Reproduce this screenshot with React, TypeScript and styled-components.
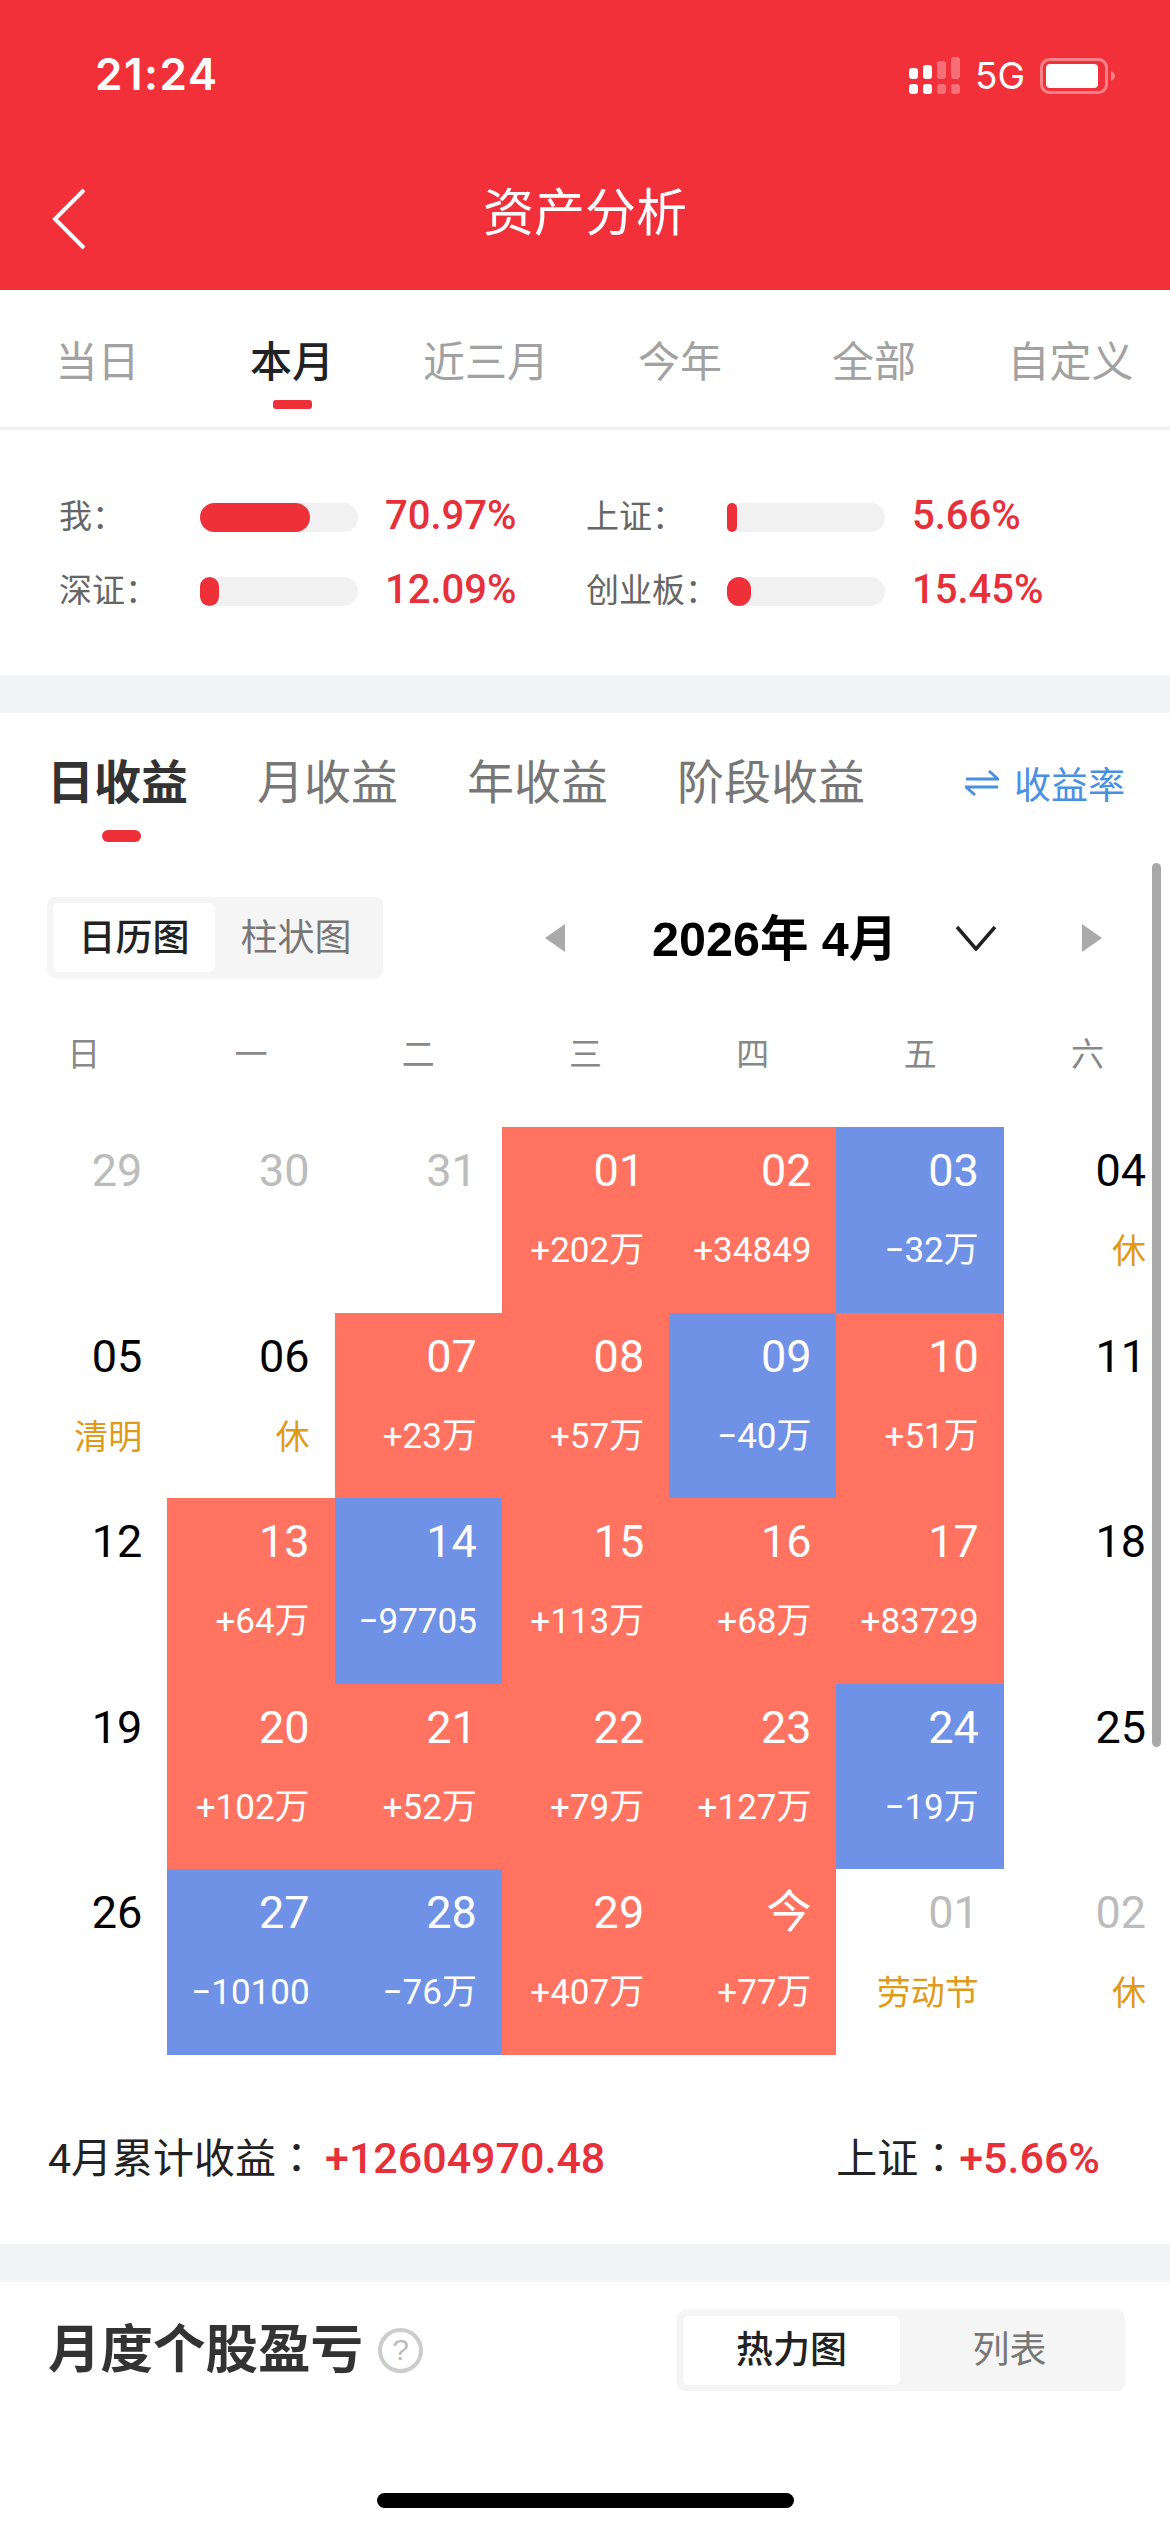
import React from "react";
import styled, { createGlobalStyle } from "styled-components";

const GlobalStyle = createGlobalStyle`
  * { box-sizing: border-box; }
  html, body { margin: 0; padding: 0; background: #fff; }
  body { font-family: Roboto, "Noto Sans CJK SC", "Liberation Sans", sans-serif; }
`;

const RED = "#ee3039";

const Page = styled.div`
  position: relative;
  width: 1170px;
  height: 2532px;
  overflow: hidden;
  background: #fff;
`;

const Header = styled.header`
  height: 290px;
  background: #f1303a;
  color: #fff;
  display: flex;
  flex-direction: column;
`;

const StatusBar = styled.div`
  height: 150px;
  padding: 49px 54px 0 95px;
  display: flex;
  justify-content: space-between;
  align-items: flex-start;
`;

const Clock = styled.span`
  font-family: Inter, "Liberation Sans", sans-serif;
  font-size: 44px;
  line-height: 50px;
  font-weight: 600;
  letter-spacing: 1.5px;
`;

const StatusIcons = styled.div`
  display: flex;
  align-items: center;
  gap: 15px;
  height: 50px;
  padding-top: 3px;
`;

const NetLabel = styled.span`
  font-family: Inter, "Liberation Sans", sans-serif;
  font-size: 37px;
  line-height: 40px;
  font-weight: 400;
`;

const NavBar = styled.div`
  display: flex;
  align-items: center;
  justify-content: center;
  position: relative;
  height: 126px;
  padding-top: 2px;
`;

const BackIcon = styled.svg`
  position: absolute;
  left: 50px;
  top: 38px;
`;

const NavTitle = styled.h1`
  margin: 0;
  font-size: 51px;
  line-height: 60px;
  font-weight: 400;
`;

const PeriodTabs = styled.nav`
  height: 140px;
  border-bottom: 3px solid #f0f0f0;
  display: grid;
  grid-template-columns: 195px 194px 194px 194px 194px 199px;
`;

const PeriodTab = styled.div<{ $active?: boolean }>`
  position: relative;
  display: flex;
  justify-content: center;
  padding-top: 43px;
  font-size: 42px;
  line-height: 60px;
  font-weight: ${(p) => (p.$active ? 500 : 400)};
  color: ${(p) => (p.$active ? "#222" : "#a2a2a2")};

  ${(p) =>
    p.$active &&
    `&::after {
      content: "";
      position: absolute;
      left: 78px;
      top: 110px;
      width: 39px;
      height: 9px;
      border-radius: 3px;
      background: ${RED};
    }`}
`;

const Stats = styled.section`
  height: 245px;
  padding: 69px 0 0 59px;
  display: grid;
  grid-template-columns: 527px 1fr;
  grid-auto-rows: 74px;
`;

const StatItem = styled.div`
  display: flex;
  align-items: center;
  height: 36px;
`;

const StatLabel = styled.span`
  width: 141px;
  font-size: 33px;
  line-height: 36px;
  color: #666;
`;

const Track = styled.div`
  width: 158px;
  height: 29px;
  border-radius: 15px;
  background: #f1f1f2;
`;

const Fill = styled.div`
  height: 100%;
  border-radius: 15px;
  background: ${RED};
`;

const StatValue = styled.span`
  margin: 0 0 2px 27px;
  font-size: 40px;
  line-height: 44px;
  font-weight: 500;
  color: #e6303a;
`;

const Gap = styled.div`
  height: 38px;
  background: #f3f4f6;
`;

const EarnTabs = styled.div`
  height: 184px;
  padding: 38px 45px 0 47px;
  display: flex;
  align-items: flex-start;
`;

const EarnTab = styled.div<{ $active?: boolean }>`
  position: relative;
  margin-right: 69px;
  font-size: 47px;
  line-height: 64px;
  font-weight: ${(p) => (p.$active ? 700 : 400)};
  color: ${(p) => (p.$active ? "#333" : "#777")};

  ${(p) =>
    p.$active &&
    `&::after {
      content: "";
      position: absolute;
      left: 55px;
      top: 79px;
      width: 39px;
      height: 12px;
      border-radius: 6px;
      background: ${RED};
    }`}
`;

const RateLink = styled.div`
  margin-left: auto;
  display: flex;
  align-items: center;
  gap: 15px;
  height: 64px;
  font-size: 37px;
  color: #4a90e2;
`;

const ToolRow = styled.div`
  height: 138px;
  padding: 0 0 0 47px;
  display: flex;
  align-items: flex-start;
`;

const Segmented = styled.div<{ $width: number; $height: number }>`
  width: ${(p) => p.$width}px;
  height: ${(p) => p.$height}px;
  padding: 6px;
  display: flex;
  border-radius: 8px;
  background: #f5f5f6;
`;

const SegButton = styled.div<{ $active?: boolean; $grow?: number }>`
  flex: ${(p) => p.$grow ?? 1};
  display: flex;
  align-items: center;
  justify-content: center;
  padding-bottom: 6px;
  font-size: 37px;
  border-radius: 6px;
  font-weight: ${(p) => (p.$active ? 500 : 400)};
  background: ${(p) => (p.$active ? "#fff" : "transparent")};
  color: ${(p) => (p.$active ? "#222" : "#777")};
`;

const MonthNav = styled.div`
  margin-left: 162px;
  width: 557px;
  height: 81px;
  display: flex;
  align-items: center;
`;

const MonthTitle = styled.span`
  margin-left: 87px;
  width: 240px;
  padding-bottom: 6px;
  font-family: "Liberation Sans", "Noto Sans CJK SC", sans-serif;
  font-size: 48.5px;
  font-weight: 700;
  color: #000;
  white-space: nowrap;
`;

const DownIcon = styled.svg`
  margin-left: 63px;
`;

const NextIcon = styled.svg`
  margin-left: 85px;
`;

const WeekRow = styled.div`
  height: 92px;
  display: grid;
  grid-template-columns: repeat(7, 167.3px);
`;

const WeekDay = styled.div`
  text-align: center;
  font-size: 33px;
  line-height: 40px;
  color: #888;
`;

const Calendar = styled.div`
  display: grid;
  grid-template-columns: repeat(7, 167.3px);
  grid-auto-rows: 185.6px;
`;

type Tone = "up" | "down" | "plain" | "muted";

const Cell = styled.div<{ $tone: Tone }>`
  padding: 19px 25px 0 0;
  text-align: right;
  background: ${(p) =>
    p.$tone === "up" ? "#ff7360" : p.$tone === "down" ? "#6f92e6" : "transparent"};
  color: ${(p) =>
    p.$tone === "plain" ? "#000" : p.$tone === "muted" ? "#bcbcbc" : "#fff"};
`;

const CellDay = styled.div`
  font-size: 45px;
  line-height: 50px;
`;

const CellNote = styled.div<{ $holiday?: boolean }>`
  margin-top: 35px;
  font-size: ${(p) => (p.$holiday ? 34 : 35)}px;
  line-height: 40px;
  white-space: nowrap;
  color: ${(p) => (p.$holiday ? "#e09a1a" : "inherit")};
`;

const Summary = styled.div`
  height: 189px;
  padding: 70px 70px 0 48px;
  display: flex;
  justify-content: space-between;
  font-size: 41px;
  line-height: 60px;
  color: #222;
`;

const SummaryColon = styled.span`
  font-family: "Noto Sans CJK TC", sans-serif;
`;

const Gain = styled.span<{ $gap: number }>`
  margin-left: ${(p) => p.$gap}px;
  font-size: 43px;
  font-weight: 500;
  color: #e6303a;
`;

const BottomHead = styled.div`
  padding: 28px 45px 0 48px;
  display: flex;
  align-items: center;
  justify-content: space-between;
`;

const TitleGroup = styled.div`
  display: flex;
  align-items: center;
  gap: 15px;
`;

const SectionTitle = styled.h2`
  margin: 0;
  font-size: 52.5px;
  line-height: 70px;
  font-weight: 700;
  color: #333;
`;

const HelpBadge = styled.span`
  width: 45px;
  height: 45px;
  border: 4px solid #ccc;
  border-radius: 50%;
  display: flex;
  align-items: center;
  justify-content: center;
  font-family: "Liberation Sans", sans-serif;
  font-size: 30px;
  color: #bbb;
`;

const ScrollThumb = styled.div`
  position: absolute;
  left: 1152px;
  top: 863px;
  width: 9px;
  height: 884px;
  border-radius: 5px;
  background: #a9a9a9;
`;

const HomeBar = styled.div`
  position: absolute;
  left: 377px;
  top: 2493px;
  width: 417px;
  height: 15px;
  border-radius: 8px;
  background: #000;
`;

type Day = { d: string; n?: string; t: Tone; h?: boolean };

const days: Day[] = [
  { d: "29", t: "muted" }, { d: "30", t: "muted" }, { d: "31", t: "muted" },
  { d: "01", n: "+202万", t: "up" }, { d: "02", n: "+34849", t: "up" }, { d: "03", n: "−32万", t: "down" },
  { d: "04", n: "休", t: "plain", h: true },
  { d: "05", n: "清明", t: "plain", h: true }, { d: "06", n: "休", t: "plain", h: true },
  { d: "07", n: "+23万", t: "up" }, { d: "08", n: "+57万", t: "up" }, { d: "09", n: "−40万", t: "down" },
  { d: "10", n: "+51万", t: "up" }, { d: "11", t: "plain" },
  { d: "12", t: "plain" }, { d: "13", n: "+64万", t: "up" }, { d: "14", n: "−97705", t: "down" },
  { d: "15", n: "+113万", t: "up" }, { d: "16", n: "+68万", t: "up" }, { d: "17", n: "+83729", t: "up" },
  { d: "18", t: "plain" },
  { d: "19", t: "plain" }, { d: "20", n: "+102万", t: "up" }, { d: "21", n: "+52万", t: "up" },
  { d: "22", n: "+79万", t: "up" }, { d: "23", n: "+127万", t: "up" }, { d: "24", n: "−19万", t: "down" },
  { d: "25", t: "plain" },
  { d: "26", t: "plain" }, { d: "27", n: "−10100", t: "down" }, { d: "28", n: "−76万", t: "down" },
  { d: "29", n: "+407万", t: "up" }, { d: "今", n: "+77万", t: "up" },
  { d: "01", n: "劳动节", t: "muted", h: true }, { d: "02", n: "休", t: "muted", h: true },
];

const stats = [
  { label: "我：", value: "70.97%", w: 110 },
  { label: "上证：", value: "5.66%", w: 10 },
  { label: "深证：", value: "12.09%", w: 19 },
  { label: "创业板：", value: "15.45%", w: 24 },
];

const SignalIcon = () => (
  <svg width="51" height="37" viewBox="0 0 51 37">
    <g fill="#fff">
      <rect x="0" y="11" width="9" height="11" rx="3" />
      <rect x="14" y="8" width="9" height="14" rx="3" />
      <rect x="0" y="27" width="9" height="10" rx="3" />
      <rect x="14" y="27" width="9" height="10" rx="3" />
    </g>
    <g fill="#fff" opacity="0.3">
      <rect x="28" y="4" width="9" height="18" rx="3" />
      <rect x="42" y="0" width="9" height="22" rx="3" />
      <rect x="28" y="27" width="9" height="10" rx="3" />
      <rect x="42" y="27" width="9" height="10" rx="3" />
    </g>
  </svg>
);

const BatteryIcon = () => (
  <svg width="76" height="36" viewBox="0 0 76 36">
    <rect x="1.5" y="1.5" width="65" height="33" rx="8" fill="none" stroke="#fff" strokeOpacity="0.4" strokeWidth="3" />
    <rect x="6" y="6" width="52" height="24" rx="4" fill="#fff" />
    <path d="M71 13 q4 2 4 5 q0 3 -4 5 z" fill="#fff" fillOpacity="0.4" />
  </svg>
);

export default function App() {
  return (
    <Page>
      <GlobalStyle />
      <Header>
        <StatusBar>
          <Clock>21:24</Clock>
          <StatusIcons>
            <SignalIcon />
            <NetLabel>5G</NetLabel>
            <BatteryIcon />
          </StatusIcons>
        </StatusBar>
        <NavBar>
          <BackIcon width="40" height="62" viewBox="0 0 40 62">
            <path d="M34 2 L5 31 L34 60" fill="none" stroke="#fff" strokeWidth="4" />
          </BackIcon>
          <NavTitle>资产分析</NavTitle>
        </NavBar>
      </Header>

      <PeriodTabs>
        <PeriodTab>当日</PeriodTab>
        <PeriodTab $active>本月</PeriodTab>
        <PeriodTab>近三月</PeriodTab>
        <PeriodTab>今年</PeriodTab>
        <PeriodTab>全部</PeriodTab>
        <PeriodTab>自定义</PeriodTab>
      </PeriodTabs>

      <Stats>
        {stats.map((s) => (
          <StatItem key={s.label}>
            <StatLabel>{s.label}</StatLabel>
            <Track>
              <Fill style={{ width: s.w }} />
            </Track>
            <StatValue>{s.value}</StatValue>
          </StatItem>
        ))}
      </Stats>

      <Gap />

      <EarnTabs>
        <EarnTab $active>日收益</EarnTab>
        <EarnTab>月收益</EarnTab>
        <EarnTab>年收益</EarnTab>
        <EarnTab>阶段收益</EarnTab>
        <RateLink>
          <svg width="34" height="30" viewBox="0 0 34 30">
            <path d="M1 11 H33 L24 3 M33 19 H1 L10 27" fill="none" stroke="#4a90e2" strokeWidth="3" />
          </svg>
          收益率
        </RateLink>
      </EarnTabs>

      <ToolRow>
        <Segmented $width={336} $height={81}>
          <SegButton $active>日历图</SegButton>
          <SegButton>柱状图</SegButton>
        </Segmented>
        <MonthNav>
          <svg width="20" height="28" viewBox="0 0 20 28">
            <path d="M20 0 V28 L0 14 Z" fill="#aaa" />
          </svg>
          <MonthTitle>2026年 4月</MonthTitle>
          <DownIcon width="42" height="26" viewBox="0 0 42 26">
            <path d="M2 2 L21 24 L40 2" fill="none" stroke="#222" strokeWidth="3.5" />
          </DownIcon>
          <NextIcon width="20" height="28" viewBox="0 0 20 28">
            <path d="M0 0 V28 L20 14 Z" fill="#aaa" />
          </NextIcon>
        </MonthNav>
      </ToolRow>

      <WeekRow>
        {["日", "一", "二", "三", "四", "五", "六"].map((w) => (
          <WeekDay key={w}>{w}</WeekDay>
        ))}
      </WeekRow>

      <Calendar>
        {days.map((c, i) => (
          <Cell key={i} $tone={c.t}>
            <CellDay>{c.d}</CellDay>
            {c.n && <CellNote $holiday={c.h}>{c.n}</CellNote>}
          </Cell>
        ))}
      </Calendar>

      <Summary>
        <span>
          4月累计收益<SummaryColon>：</SummaryColon>
          <Gain $gap={8}>+12604970.48</Gain>
        </span>
        <span>
          上证<SummaryColon>：</SummaryColon>
          <Gain $gap={0}>+5.66%</Gain>
        </span>
      </Summary>

      <Gap />

      <BottomHead>
        <TitleGroup>
          <SectionTitle>月度个股盈亏</SectionTitle>
          <HelpBadge>?</HelpBadge>
        </TitleGroup>
        <Segmented $width={448} $height={81}>
          <SegButton $active $grow={217}>热力图</SegButton>
          <SegButton $grow={219}>列表</SegButton>
        </Segmented>
      </BottomHead>

      <ScrollThumb />
      <HomeBar />
    </Page>
  );
}
